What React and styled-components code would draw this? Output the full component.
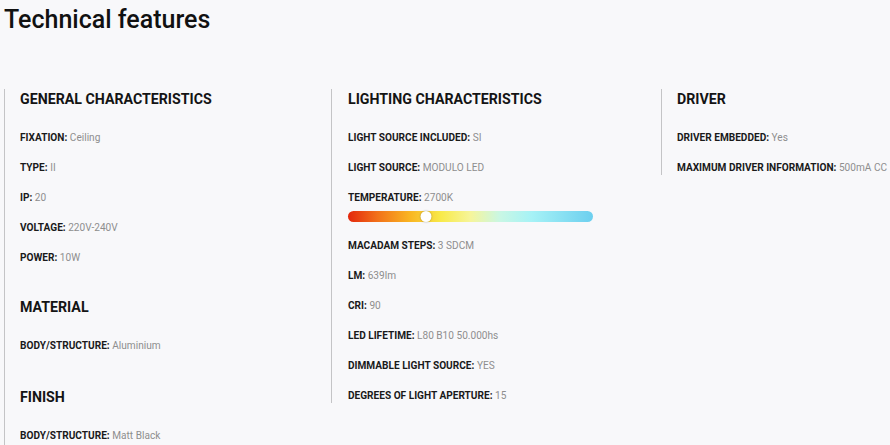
import React from 'react'
import styled, { createGlobalStyle } from 'styled-components'

const GlobalStyle = createGlobalStyle`
  html, body {
    margin: 0;
    padding: 0;
    background: #f8f8fa;
    font-family: Roboto, "Liberation Sans", Arial, sans-serif;
    overflow: hidden;
  }
`

const Page = styled.div`
  padding: 4px 0 0 4px;
  width: 1100px;
`

const Title = styled.h1`
  margin: 0;
  font-size: 25px;
  line-height: 32px;
  font-weight: 500;
  color: #111;
`

const Columns = styled.div`
  display: grid;
  grid-template-columns: 327px 330px 330px;
  align-items: start;
  margin-top: 53px;
`

const Column = styled.div`
  display: flex;
  flex-direction: column;
  gap: 32px;
  border-left: 1px solid #c4c4c6;
  padding-left: ${p => p.$pad || 15}px;
  min-height: ${p => p.$minHeight || 0}px;
`

const Section = styled.section`
  display: flex;
  flex-direction: column;
  margin-top: ${p => p.$offset || 0}px;
`

const Heading = styled.h2`
  margin: 0 0 22px;
  font-size: 14.2px;
  line-height: 20px;
  font-weight: 700;
  color: #141414;
`

const Rows = styled.div`
  display: flex;
  flex-direction: column;
  gap: 16px;
`

const Row = styled.div`
  font-size: 10.1px;
  line-height: 14px;
  white-space: nowrap;
  color: #8e8e8e;
`

const Label = styled.span`
  font-weight: 700;
  color: #1a1a1a;
`

const TempGroup = styled.div`
  display: flex;
  flex-direction: column;
  gap: 6px;
  margin-bottom: 1px;
`

const Bar = styled.div`
  position: relative;
  width: 245px;
  height: 11px;
  border-radius: 6px;
  background: linear-gradient(
    to right,
    #e3270c 0%,
    #f2711a 12%,
    #f9b421 25%,
    #f8ea4a 38%,
    #f6f59a 50%,
    #c9f7e4 62%,
    #a6f2f6 75%,
    #6ccfef 100%
  );
`

const Knob = styled.span`
  position: absolute;
  top: 0;
  width: 11px;
  height: 11px;
  border-radius: 50%;
  background: #fff;
  box-shadow: 0 0 2px rgba(0, 0, 0, 0.35);
  transform: translateX(-50%);
`

const Spec = ({ label, value }) => (
  <Row>
    <Label>{label}:</Label> {value}
  </Row>
)

const App = () => {
  return (
    <Page>
      <GlobalStyle />
      <Title>Technical features</Title>
      <Columns>
        <Column $minHeight={400}>
          <Section>
            <Heading>GENERAL CHARACTERISTICS</Heading>
            <Rows>
              <Spec label="FIXATION" value="Ceiling" />
              <Spec label="TYPE" value="II" />
              <Spec label="IP" value="20" />
              <Spec label="VOLTAGE" value="220V-240V" />
              <Spec label="POWER" value="10W" />
            </Rows>
          </Section>
          <Section>
            <Heading>MATERIAL</Heading>
            <Rows>
              <Spec label="BODY/STRUCTURE" value="Aluminium" />
            </Rows>
          </Section>
          <Section $offset={2}>
            <Heading>FINISH</Heading>
            <Rows>
              <Spec label="BODY/STRUCTURE" value="Matt Black" />
            </Rows>
          </Section>
        </Column>
        <Column $pad={16}>
          <Section>
            <Heading>LIGHTING CHARACTERISTICS</Heading>
            <Rows>
              <Spec label="LIGHT SOURCE INCLUDED" value="SI" />
              <Spec label="LIGHT SOURCE" value="MODULO LED" />
              <TempGroup>
                <Spec label="TEMPERATURE" value="2700K" />
                <Bar>
                  <Knob style={{ left: '32%' }} />
                </Bar>
              </TempGroup>
              <Spec label="MACADAM STEPS" value="3 SDCM" />
              <Spec label="LM" value="639lm" />
              <Spec label="CRI" value="90" />
              <Spec label="LED LIFETIME" value="L80 B10 50.000hs" />
              <Spec label="DIMMABLE LIGHT SOURCE" value="YES" />
              <Spec label="DEGREES OF LIGHT APERTURE" value="15" />
            </Rows>
          </Section>
        </Column>
        <Column>
          <Section>
            <Heading>DRIVER</Heading>
            <Rows>
              <Spec label="DRIVER EMBEDDED" value="Yes" />
              <Spec label="MAXIMUM DRIVER INFORMATION" value="500mA CC" />
            </Rows>
          </Section>
        </Column>
      </Columns>
    </Page>
  )
}

export default App
